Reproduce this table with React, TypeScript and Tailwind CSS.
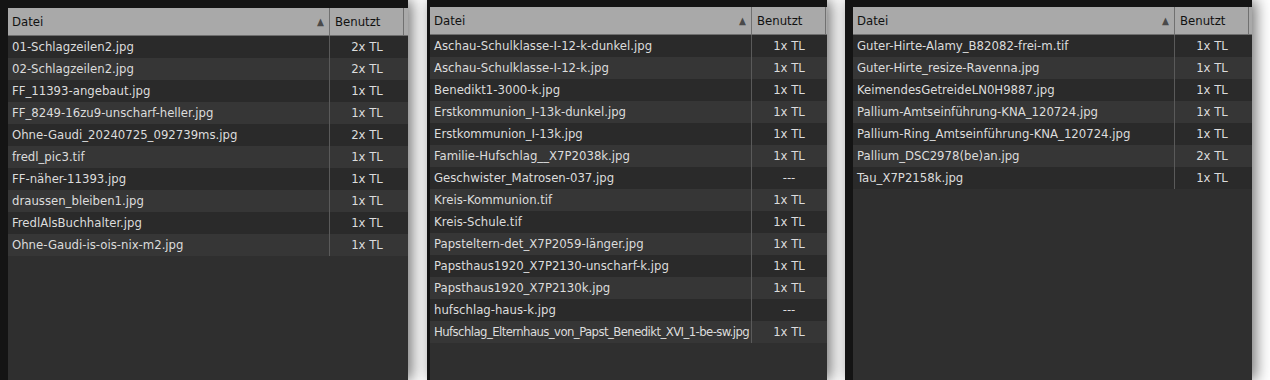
import React from "react";

type Row = { name: string; used: string; tight?: boolean };

const list1: Row[] = [
  { name: "01-Schlagzeilen2.jpg", used: "2x TL" },
  { name: "02-Schlagzeilen2.jpg", used: "2x TL" },
  { name: "FF_11393-angebaut.jpg", used: "1x TL" },
  { name: "FF_8249-16zu9-unscharf-heller.jpg", used: "1x TL" },
  { name: "Ohne-Gaudi_20240725_092739ms.jpg", used: "2x TL" },
  { name: "fredl_pic3.tif", used: "1x TL" },
  { name: "FF-näher-11393.jpg", used: "1x TL" },
  { name: "draussen_bleiben1.jpg", used: "1x TL" },
  { name: "FredlAlsBuchhalter.jpg", used: "1x TL" },
  { name: "Ohne-Gaudi-is-ois-nix-m2.jpg", used: "1x TL" },
];

const list2: Row[] = [
  { name: "Aschau-Schulklasse-I-12-k-dunkel.jpg", used: "1x TL" },
  { name: "Aschau-Schulklasse-I-12-k.jpg", used: "1x TL" },
  { name: "Benedikt1-3000-k.jpg", used: "1x TL" },
  { name: "Erstkommunion_I-13k-dunkel.jpg", used: "1x TL" },
  { name: "Erstkommunion_I-13k.jpg", used: "1x TL" },
  { name: "Familie-Hufschlag__X7P2038k.jpg", used: "1x TL" },
  { name: "Geschwister_Matrosen-037.jpg", used: "---" },
  { name: "Kreis-Kommunion.tif", used: "1x TL" },
  { name: "Kreis-Schule.tif", used: "1x TL" },
  { name: "Papsteltern-det_X7P2059-länger.jpg", used: "1x TL" },
  { name: "Papsthaus1920_X7P2130-unscharf-k.jpg", used: "1x TL" },
  { name: "Papsthaus1920_X7P2130k.jpg", used: "1x TL" },
  { name: "hufschlag-haus-k.jpg", used: "---" },
  { name: "Hufschlag_Elternhaus_von_Papst_Benedikt_XVI_1-be-sw.jpg", used: "1x TL", tight: true },
];

const list3: Row[] = [
  { name: "Guter-Hirte-Alamy_B82082-frei-m.tif", used: "1x TL" },
  { name: "Guter-Hirte_resize-Ravenna.jpg", used: "1x TL" },
  { name: "KeimendesGetreideLN0H9887.jpg", used: "1x TL" },
  { name: "Pallium-Amtseinführung-KNA_120724.jpg", used: "1x TL" },
  { name: "Pallium-Ring_Amtseinführung-KNA_120724.jpg", used: "1x TL" },
  { name: "Pallium_DSC2978(be)an.jpg", used: "2x TL" },
  { name: "Tau_X7P2158k.jpg", used: "1x TL" },
];

const FileTable = ({ rows }: { rows: Row[] }) => (
  <div className="flex flex-col flex-1 bg-[#2f2f2f]">
    {/* header */}
    <div className="flex h-[28px] bg-[#a9a9a9] border-b border-[#6e6e6e] text-[13px] text-[#111]">
      <div className="w-[322px] flex items-center justify-between pl-[4px] pr-[5px] border-r border-[#707070]">
        <span>Datei</span>
        <span className="text-[10px] text-[#4a4a4a]">▲</span>
      </div>
      <div className="w-[74px] flex items-center pl-[5px] border-r border-[#707070]">Benutzt</div>
      <div className="flex-1" />
    </div>
    {rows.map((r, i) => (
      <div
        key={r.name}
        className={`flex h-[22px] text-[13px] text-[#dcdcdc] ${i % 2 === 0 ? "bg-[#2a2a2a]" : "bg-[#363636]"}`}
      >
        <div
          className={`w-[322px] flex items-center pl-[4px] border-r border-[#5a5a5a] whitespace-nowrap overflow-hidden ${r.tight ? "tracking-[-0.58px]" : ""}`}
        >
          {r.name}
        </div>
        <div className="w-[74px] flex items-center justify-center">{r.used}</div>
      </div>
    ))}
  </div>
);

export default function App() {
  return (
    <div
      className="flex h-[380px] w-[1270px] bg-white overflow-hidden"
      style={{ fontFamily: '"DejaVu Sans Condensed", "DejaVu Sans", sans-serif' }}
    >
      <div className="relative z-10 flex w-[408px] bg-[#141414] pt-[8px] pl-[8px] shadow-[4px_0_14px_rgba(0,0,0,0.55)]">
        <FileTable rows={list1} />
      </div>
      <div className="relative z-10 ml-[19px] flex w-[400px] bg-[#141414] pt-[7px] pl-[3px] shadow-[4px_0_14px_rgba(0,0,0,0.55)]">
        <FileTable rows={list2} />
      </div>
      <div className="relative z-10 ml-[18px] flex w-[407px] bg-[#141414] pt-[7px] pl-[8px] shadow-[4px_0_14px_rgba(0,0,0,0.55)]">
        <FileTable rows={list3} />
      </div>
    </div>
  );
}
